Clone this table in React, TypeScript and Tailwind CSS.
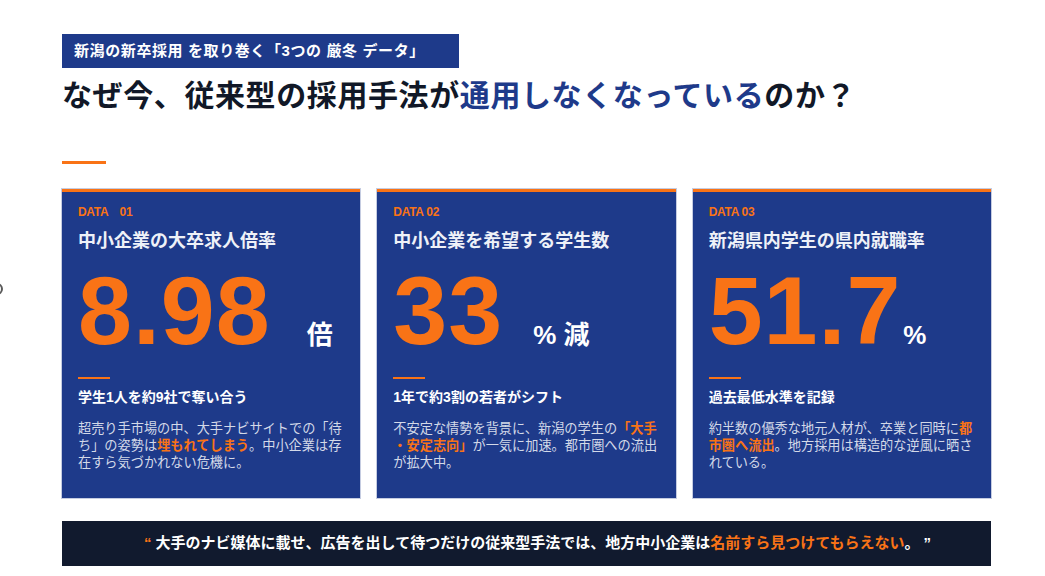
const SANS = "font-['Liberation_Sans','Noto_Sans_CJK_JP',sans-serif]"

interface Stat {
  label: string
  title: string
  value: string
  unit: string
  unitGap: string
  sub: string
  body: React.ReactNode
}

const stats: Stat[] = [
  {
    label: 'DATA\u300001',
    title: '中小企業の大卒求人倍率',
    value: '8.98',
    unit: '倍',
    unitGap: 'ml-[36px]',
    sub: '学生1人を約9社で奪い合う',
    body: (
      <>
        超売り手市場の中、大手ナビサイトでの「待ち」の姿勢は
        <span className="font-bold text-[#f97316]">埋もれてしまう</span>
        。中小企業は存在すら気づかれない危機に。
      </>
    ),
  },
  {
    label: 'DATA 02',
    title: '中小企業を希望する学生数',
    value: '33',
    unit: '% 減',
    unitGap: 'ml-[30px]',
    sub: '1年で約3割の若者がシフト',
    body: (
      <>
        不安定な情勢を背景に、新潟の学生の
        <span className="font-bold text-[#f97316]">
          「大手<wbr />・安定志向」
        </span>
        が一気に加速。都市圏への流出が拡大中。
      </>
    ),
  },
  {
    label: 'DATA 03',
    title: '新潟県内学生の県内就職率',
    value: '51.7',
    unit: '%',
    unitGap: 'ml-[2px]',
    sub: '過去最低水準を記録',
    body: (
      <>
        約半数の優秀な地元人材が、卒業と同時に
        <span className="font-bold text-[#f97316]">都市圏へ流出</span>
        。地方採用は構造的な逆風に晒されている。
      </>
    ),
  },
]

function StatCard({ s }: { s: Stat }) {
  return (
    <div className="h-[309px] bg-[#1e3a8a] border-t-[3px] border-[#f97316] pl-4 pr-3 pt-[13px] shadow-[0_0_0_1px_rgba(90,110,170,0.35)]">
      <div className="text-[12px] leading-[14px] font-bold tracking-tight text-[#f97316]">{s.label}</div>
      <div className="mt-[9px] text-[18px] leading-[26px] font-bold text-[#eef1f8]">{s.title}</div>
      <div className="mt-[8px] flex items-baseline">
        <span className="text-[97px] leading-none font-bold tracking-[0.01em] text-[#f97316] font-['Liberation_Sans',sans-serif]">
          {s.value}
        </span>
        <span className={`${s.unitGap} text-[26px] font-bold text-white`}>{s.unit}</span>
      </div>
      <div className="mt-[18px] w-8 h-[2px] bg-[#f97316]" />
      <div className="mt-[8px] text-[14px] leading-[20px] font-bold text-white">{s.sub}</div>
      <p className="mt-[13px] text-[13.2px] leading-[17px] text-[#d3d9e8]">{s.body}</p>
    </div>
  )
}

export default function App() {
  return (
    <div className={`relative w-[1045px] h-[576px] bg-white overflow-hidden ${SANS}`}>
      {/* 左端の見切れた丸 */}
      <div className="absolute left-[-9px] top-[283px] w-[12px] h-[12px] rounded-full border-2 border-[#5a5a5a]" />

      <div className="pl-[62px] pt-[34px] w-[991px]">
        <div className="w-[397px] h-[34px] bg-[#1e3a8a] pl-3 flex items-center text-white text-[15px] font-bold tracking-[0.04em]">
          新潟の新卒採用 を取り巻く「3つの 厳冬 データ」
        </div>

        <h1 className="mt-[10px] text-[30px] leading-[36px] font-bold tracking-[0.02em] text-[#111827]">
          なぜ今、従来型の採用手法が<span className="text-[#1e3a8a]">通用しなくなっている</span>のか？
        </h1>

        <div className="mt-[47px] w-[44px] h-[3px] bg-[#f97316]" />

        <div className="mt-[25px] grid grid-cols-3 gap-[17px]">
          {stats.map((s) => (
            <StatCard key={s.label} s={s} />
          ))}
        </div>

        <div className="mt-[23px] h-[45px] bg-[#111a2e] pl-[22px] flex items-center justify-center text-[15px] font-bold text-white">
          <span className="text-[#f97316] mr-1">“</span>
          大手のナビ媒体に載せ、広告を出して待つだけの従来型手法では、地方中小企業は
          <span className="text-[#f97316]">名前すら見つけてもらえない</span>。
          <span className="ml-1">”</span>
        </div>
      </div>
    </div>
  )
}
